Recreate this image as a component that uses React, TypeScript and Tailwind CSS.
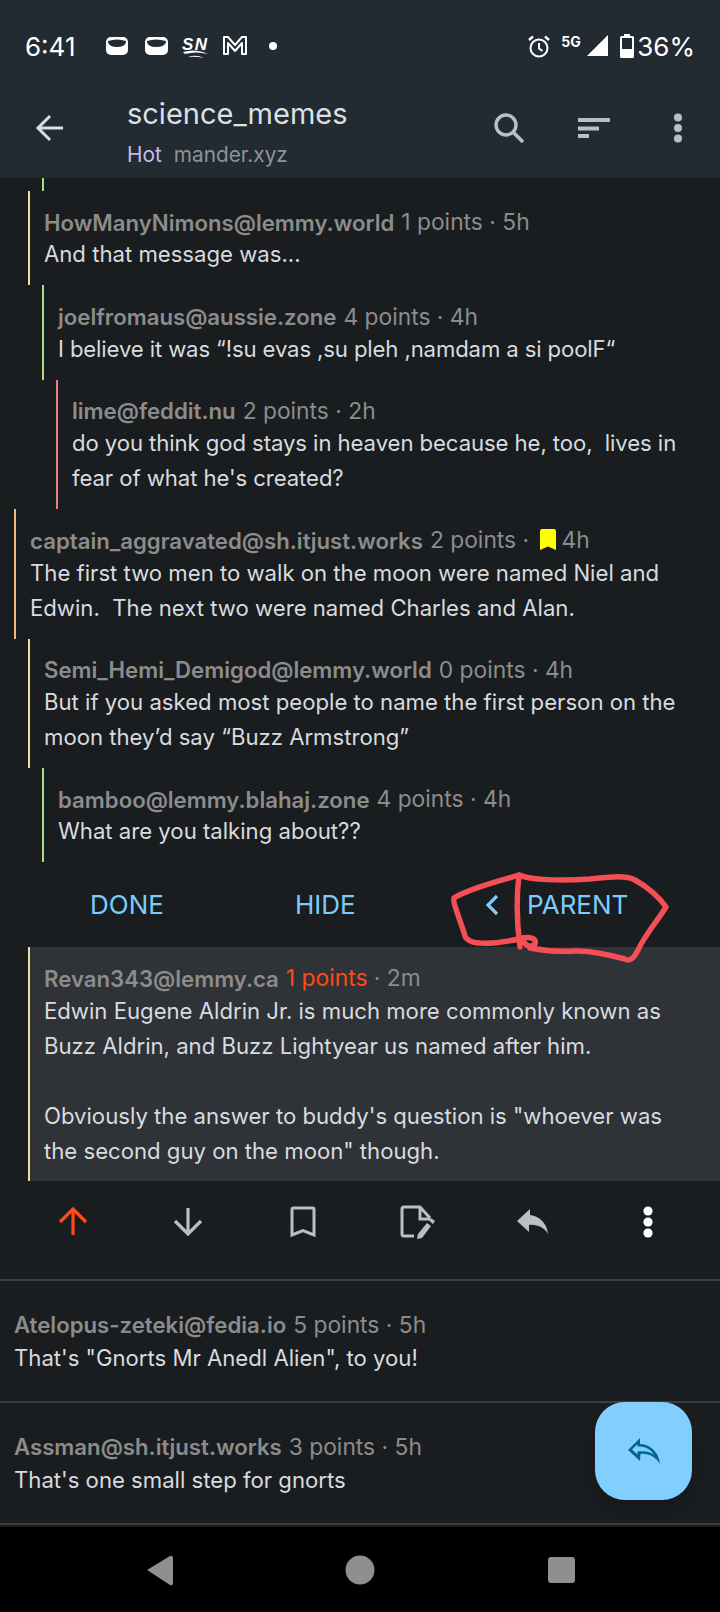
import React from 'react';

type Comment = {
  name: string;
  points: string;
  age: string;
  lines: string[];
  indent: string;
  bar: string;
  saved?: boolean;
  tracking?: string;
};

const topComments: Comment[] = [
  {
    name: 'HowManyNimons@lemmy.world',
    points: '1 points',
    age: '5h',
    lines: ['And that message was...'],
    indent: 'ml-[28px]',
    bar: 'border-[#e9e19b]',
  },
  {
    name: 'joelfromaus@aussie.zone',
    points: '4 points',
    age: '4h',
    lines: ['I believe it was “!su evas ,su pleh ,namdam a si poolF“'],
    indent: 'ml-[42px]',
    bar: 'border-[#a9dc86]',
    tracking: 'tracking-[-0.13px]',
  },
  {
    name: 'lime@feddit.nu',
    points: '2 points',
    age: '2h',
    lines: ['do you think god stays in heaven because he, too,  lives in', "fear of what he's created?"],
    indent: 'ml-[56px]',
    bar: 'border-[#e58080]',
    tracking: 'tracking-[-0.08px]',
  },
  {
    name: 'captain_aggravated@sh.itjust.works',
    points: '2 points',
    age: '4h',
    saved: true,
    lines: ['The first two men to walk on the moon were named Niel and', 'Edwin.  The next two were named Charles and Alan.'],
    indent: 'ml-[14px]',
    bar: 'border-[#f3b875]',
  },
  {
    name: 'Semi_Hemi_Demigod@lemmy.world',
    points: '0 points',
    age: '4h',
    lines: ['But if you asked most people to name the first person on the', 'moon they’d say “Buzz Armstrong”'],
    indent: 'ml-[28px]',
    bar: 'border-[#e9e19b]',
  },
  {
    name: 'bamboo@lemmy.blahaj.zone',
    points: '4 points',
    age: '4h',
    lines: ['What are you talking about??'],
    indent: 'ml-[42px]',
    bar: 'border-[#a9dc86]',
  },
];

function Meta({ name, points, age, saved, hot }: { name: string; points: string; age: string; saved?: boolean; hot?: boolean }) {
  return (
    <div className="flex items-center h-[30.4px] text-[22.8px] text-[#8c8c8c] whitespace-pre">
      <span className="font-semibold text-[22.2px]">{name}</span>
      <span className={hot ? 'ml-[7px] text-[#ff4a12]' : 'ml-[7px]'}>{points}</span>
      <span> · </span>
      {saved && (
        <svg width="18" height="22" viewBox="0 0 18 22" className="ml-[3px] mr-[5px]">
          <path d="M1 2 Q1 0 3 0 H15 Q17 0 17 2 V21 L9 17.5 L1 21 Z" fill="#ffff00" />
        </svg>
      )}
      <span>{age}</span>
    </div>
  );
}

function CommentRow({ c }: { c: Comment }) {
  return (
    <div className={`${c.indent} ${c.bar} border-l-2 pl-[14px] pt-[16px] pb-[13px]`}>
      <Meta name={c.name} points={c.points} age={c.age} saved={c.saved} />
      {c.lines.map((l) => (
        <div key={l} className={`h-[35px] leading-[35px] text-[#d8dbdf] whitespace-pre ${c.tracking ?? ''}`}>
          {l}
        </div>
      ))}
    </div>
  );
}

function FlatComment({ name, points, age, body }: { name: string; points: string; age: string; body: string }) {
  return (
    <div className="h-[122px] pt-[29px] pl-[14px] border-b-2 border-[#3b3f44]">
      <Meta name={name} points={points} age={age} />
      <div className="mt-[1px] h-[35px] leading-[35px] text-[#d8dbdf]">{body}</div>
    </div>
  );
}

export default function App() {
  return (
    <div className="relative w-[720px] h-[1612px] overflow-hidden bg-[#1a1d20] font-['Inter',sans-serif] text-[22.15px]">
      <div className="bg-[#222a32] h-[178px]">
        {/* status bar */}
        <div className="h-[92px] flex items-center pl-[25px] pr-[25px] text-white text-[26px]">
          <span className="w-[81px]">6:41</span>
          <svg width="172" height="26" viewBox="0 0 172 26">
            <rect x="0" y="4" width="22" height="18" rx="5" fill="#fff" />
            <path d="M2 8 Q11 5 20 8 V9 Q19 14 11 14 Q3 14 2 9Z" fill="#222a32" />
            <rect x="39" y="4" width="23" height="18" rx="5" fill="#fff" />
            <path d="M41 8 Q50 5 60 8 V9 Q59 14 50 14 Q42 14 41 9Z" fill="#222a32" />
            <text x="76" y="17" fill="#fff" fontSize="17" fontWeight="800" fontStyle="italic" fontFamily="Liberation Sans" textLength="25">SN</text>
            <path d="M77 19 Q90 15 102 21 Q90 18 79 21 Z M82 24 Q90 21 98 25 Q90 23 82 24Z" fill="#fff" />
            <path d="M118 21 V4 H122 L129 12 L136 4 H140 V21 H136 V10 L129 18 L122 10 V21 Z" fill="none" stroke="#fff" strokeWidth="2" strokeLinejoin="round" />
            <circle cx="167" cy="13" r="4" fill="#fff" />
          </svg>
          <svg width="22" height="23" viewBox="0 0 22 23" className="ml-auto">
            <circle cx="11" cy="13" r="8.5" fill="none" stroke="#fff" strokeWidth="2" />
            <path d="M11 8 V13.5 L14.5 16" fill="none" stroke="#fff" strokeWidth="2" />
            <path d="M1 5 L5 1.5 M21 5 L17 1.5" stroke="#fff" strokeWidth="2.4" />
          </svg>
          <span className="ml-[11px] mb-[8px] text-[14px] font-bold w-[20px] leading-none">5G</span>
          <svg width="22" height="22" viewBox="0 0 22 22" className="ml-[6px]">
            <path d="M21 0 V21 H0 Z" fill="#fff" />
          </svg>
          <svg width="14" height="24" viewBox="0 0 14 24" className="ml-[11px]">
            <path fillRule="evenodd" d="M4 0 H10 V2 H12.5 Q14 2 14 3.5 V22.5 Q14 24 12.5 24 H1.5 Q0 24 0 22.5 V3.5 Q0 2 1.5 2 H4 Z M2 4 V15 H12 V4 Z" fill="#fff" />
          </svg>
          <span className="ml-[3px]">36%</span>
        </div>
        {/* toolbar */}
        <div className="h-[72px] flex items-center">
          <svg width="30" height="30" viewBox="0 0 30 30" className="ml-[35px]">
            <path d="M28 15 H3 M15 3 L3 15 L15 27" fill="none" stroke="#d9dee4" strokeWidth="3" />
          </svg>
          <div className="ml-[62px] w-[367px] mt-[10px]">
            <div className="text-[29px] leading-[36px] text-[#dce0e5]">science_memes</div>
            <div className="flex items-baseline text-[20.8px] leading-[30px] mt-[8px]">
              <span className="text-[#c5bfe8]">Hot</span>
              <span className="ml-[12px] text-[#8e9398]">mander.xyz</span>
            </div>
          </div>
          <svg width="30" height="30" viewBox="0 0 30 30">
            <circle cx="12" cy="12" r="10" fill="none" stroke="#b9bfc7" strokeWidth="3.4" />
            <path d="M19 19 L29 29" stroke="#b9bfc7" strokeWidth="3.6" />
          </svg>
          <svg width="32" height="20" viewBox="0 0 32 20" className="ml-[54px]">
            <path d="M0 0 H32 V4 H0 Z M0 8.5 H21 V12.5 H0 Z M0 16 H11 V20 H0 Z" fill="#b9bfc7" />
          </svg>
          <svg width="8" height="30" viewBox="0 0 8 30" className="ml-[64px]">
            <circle cx="4" cy="4.5" r="4" fill="#b9bfc7" />
            <circle cx="4" cy="15" r="4" fill="#b9bfc7" />
            <circle cx="4" cy="25.5" r="4" fill="#b9bfc7" />
          </svg>
        </div>
      </div>

      <div className="ml-[42px] h-[13px] border-l-2 border-[#a9dc86]" />
      {topComments.map((c) => (
        <CommentRow key={c.name} c={c} />
      ))}

      {/* actions of the open comment */}
      <div className="h-[85px] flex items-center text-[26px] text-[#7ccbfb]">
        <span className="ml-[90px] w-[205px]">DONE</span>
        <span className="w-[190px]">HIDE</span>
        <svg width="14" height="22" viewBox="0 0 14 22">
          <path d="M12 2 L3 11 L12 20" fill="none" stroke="#7ccbfb" strokeWidth="3.2" />
        </svg>
        <span className="ml-[28px]">PARENT</span>
      </div>

      <div className="ml-[28px] border-l-2 border-[#e9e19b] bg-[#2f3237] pl-[14px] pt-[16px] pb-[12px]">
        <Meta name="Revan343@lemmy.ca" points="1 points" age="2m" hot />
        {[
          'Edwin Eugene Aldrin Jr. is much more commonly known as',
          'Buzz Aldrin, and Buzz Lightyear us named after him.',
          '',
          'Obviously the answer to buddy\'s question is "whoever was',
          'the second guy on the moon" though.',
        ].map((l, i) => (
          <div key={i} className="h-[35px] leading-[35px] text-[#d8dbdf]">
            {l}
          </div>
        ))}
      </div>

      <div className="h-[100px] px-[15px] pb-[15px] border-b-2 border-[#3b3f44] grid grid-cols-6 items-center justify-items-center">
        <svg width="30" height="30" viewBox="0 0 30 30">
          <path d="M15 28 V2 M2 15 L15 2 L28 15" fill="none" stroke="#ff4a12" strokeWidth="3.2" />
        </svg>
        <svg width="30" height="30" viewBox="0 0 30 30">
          <path d="M15 1 V27 M2 14 L15 27 L28 14" fill="none" stroke="#b9bfc7" strokeWidth="3.2" />
        </svg>
        <svg width="26" height="32" viewBox="0 0 26 32">
          <path d="M2 3.5 Q2 2 3.5 2 H22.5 Q24 2 24 3.5 V29 L13 24.5 L2 29 Z" fill="none" stroke="#b9bfc7" strokeWidth="3" />
        </svg>
        <svg width="36" height="34" viewBox="0 0 36 34">
          <path d="M14 31 H4 Q2 31 2 29 V4 Q2 2 4 2 H20 L30 13 M20 2 V14 H30" fill="none" stroke="#b9bfc7" strokeWidth="3" />
          <path d="M17 34 L18 29 L27 18 L31 21 L22 33 Z M29 15.5 L31 13 L35 16 L33 19 Z" fill="#b9bfc7" />
        </svg>
        <svg width="32" height="26" viewBox="0 0 32 26">
          <path d="M13 0 L0 12 L12 23 V16 C20 15 28 19 31 25 C30 14 22 7 13 6 Z" fill="#b9bfc7" />
        </svg>
        <svg width="10" height="34" viewBox="0 0 10 34">
          <circle cx="5" cy="6" r="4.6" fill="#fff" />
          <circle cx="5" cy="17" r="4.6" fill="#fff" />
          <circle cx="5" cy="28" r="4.6" fill="#fff" />
        </svg>
      </div>

      <FlatComment name="Atelopus-zeteki@fedia.io" points="5 points" age="5h" body={'That\'s "Gnorts Mr Anedl Alien", to you!'} />
      <FlatComment name="Assman@sh.itjust.works" points="3 points" age="5h" body="That's one small step for gnorts" />

      {/* android nav bar */}
      <div className="absolute left-0 right-0 bottom-0 h-[85px] bg-black">
        <svg width="720" height="85" viewBox="0 0 720 85">
          <path d="M147 43 L170 29 Q173 28 173 31 V56 Q173 59 170 58 Z" fill="#8f8f8f" />
          <circle cx="360" cy="43" r="14.5" fill="#8f8f8f" />
          <rect x="548" y="30" width="27" height="26" rx="3" fill="#8f8f8f" />
        </svg>
      </div>

      {/* reply fab */}
      <div className="absolute left-[595px] top-[1402px] w-[97px] h-[98px] rounded-[30px] bg-[#82cfff] shadow-lg flex items-center justify-center">
        <svg width="32" height="26" viewBox="0 0 32 26">
          <path
            fillRule="evenodd"
            d="M12 0 L0 12 L12 23 L12.5 16 C20 15 28 19 32 26 C31 14 22 6 12 6 Z M9.5 6 L4 11.5 L9.5 16.5 V13.5 C17 12.5 23 14 26 17 C23 11 17 8.5 9.5 8.5 Z"
            fill="#00668a"
          />
        </svg>
      </div>

      {/* hand drawn scribble around PARENT */}
      <svg className="absolute left-0 top-0 pointer-events-none" width="720" height="1612" viewBox="0 0 720 1612">
        <path
          d="M519 875 C500 881 470 888 454 898 C452 901 462 925 465 936 C468 945 490 945 519 939 C530 936 537 938 535 944 C531 948 526 946 524 942 M519 875 C516 900 517 925 520 947 M519 875 C530 880 560 881 590 879 C610 877 625 875 635 880 C648 887 660 898 666 907 C658 920 645 935 638 950 C634 958 630 962 625 959 C610 955 590 950 575 951 C558 952 540 950 530 948"
          fill="none"
          stroke="#f44f55"
          strokeWidth="5.5"
          strokeLinecap="round"
          strokeLinejoin="round"
        />
      </svg>
    </div>
  );
}
